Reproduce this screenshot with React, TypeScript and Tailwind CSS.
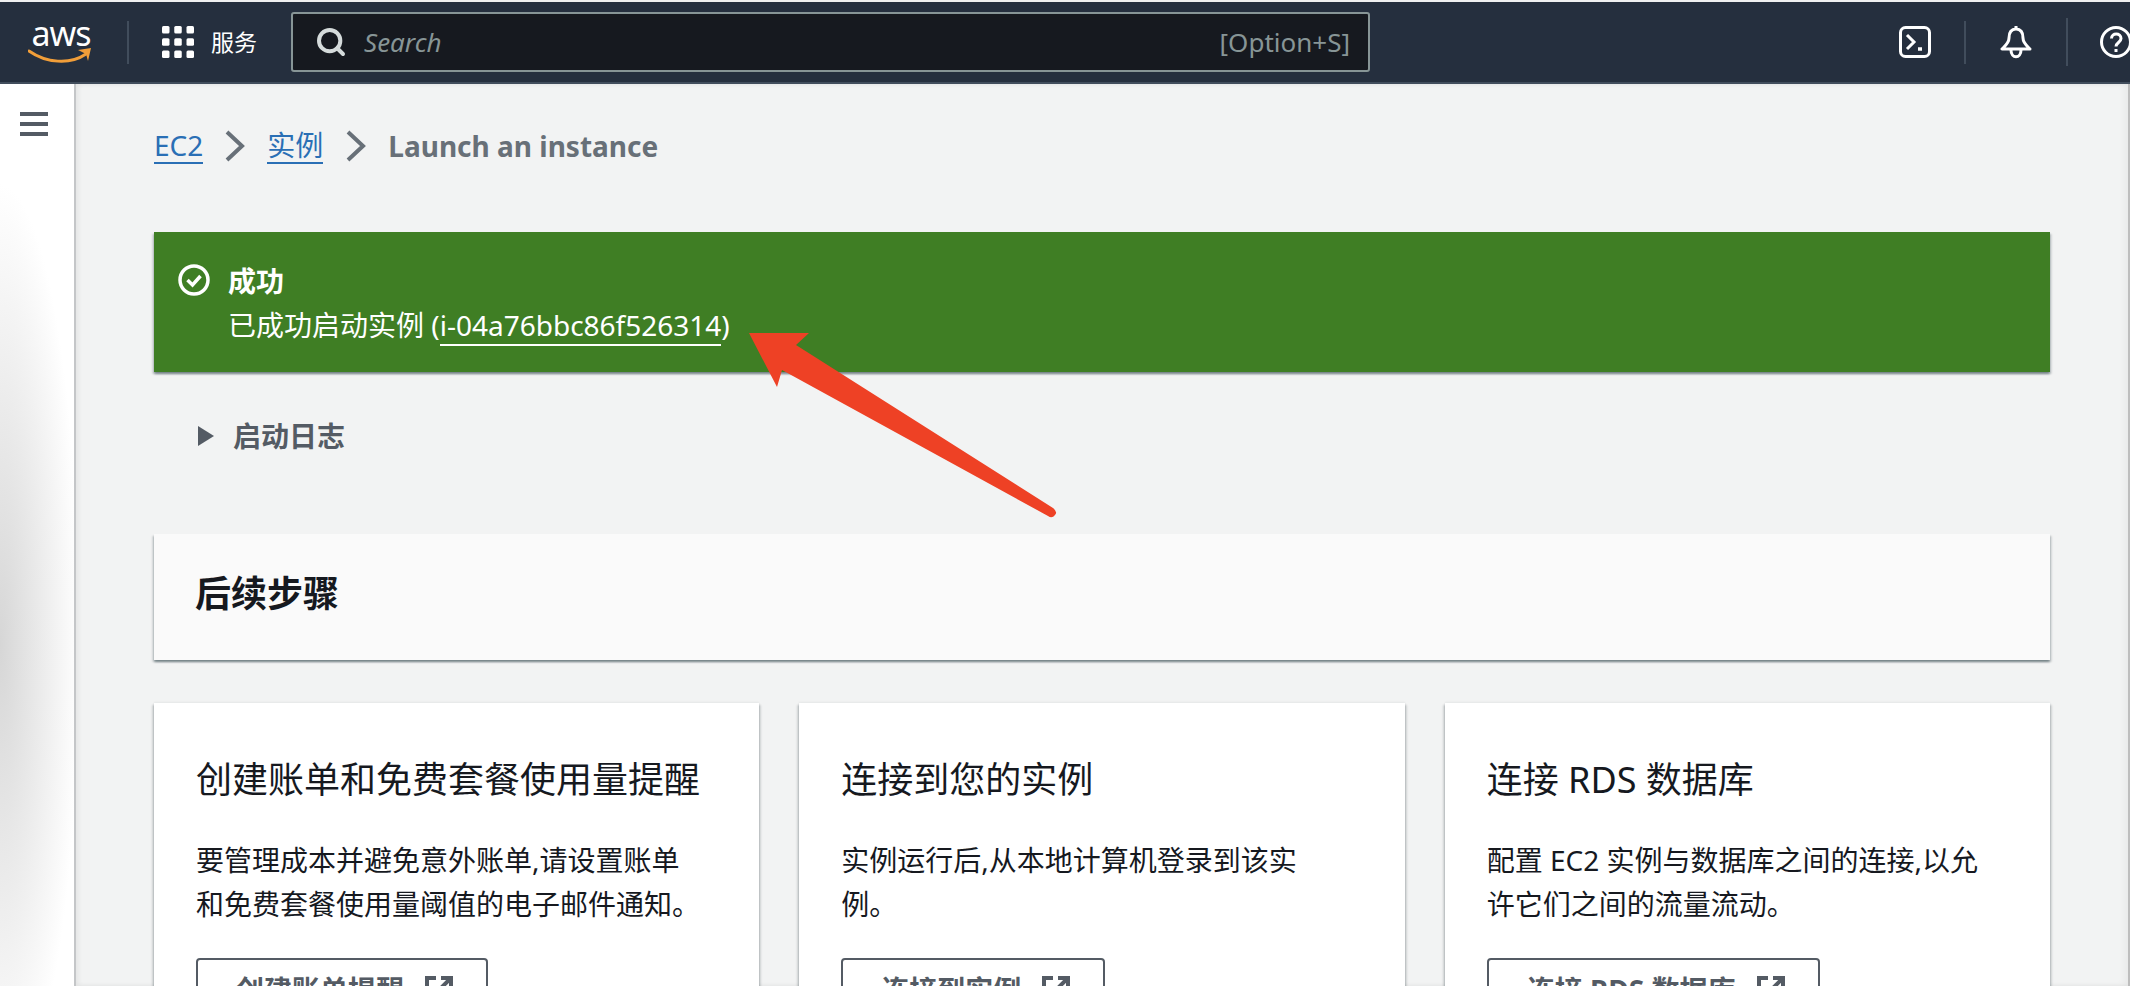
import { Search } from 'lucide-react';

const cards = [
  {
    title: '创建账单和免费套餐使用量提醒',
    body: '要管理成本并避免意外账单,请设置账单和免费套餐使用量阈值的电子邮件通知。',
    action: '创建账单提醒',
  },
  {
    title: '连接到您的实例',
    body: '实例运行后,从本地计算机登录到该实例。',
    action: '连接到实例',
  },
  {
    title: '连接 RDS 数据库',
    body: '配置 EC2 实例与数据库之间的连接,以允许它们之间的流量流动。',
    action: '连接 RDS 数据库',
  },
];

const Chevron = () => (
  <svg width="20" height="32" viewBox="0 0 20 32" fill="none" stroke="#687078" strokeWidth="4">
    <path d="M2 2l15 14L2 30" />
  </svg>
);

const ExternalIcon = () => (
  <svg width="30" height="30" viewBox="0 0 30 30" fill="none" stroke="#545b64" strokeWidth="4">
    <path d="M12 3H3v24h24v-9" />
    <path d="M17 3h10v10M27 3L13 17" />
  </svg>
);

const AwsLogo = () => (
  <div className="flex w-[66px] flex-col items-center">
    <span className="h-[28px] text-[34px] leading-[28px] tracking-[-1px] text-white">aws</span>
    <svg width="66" height="20" viewBox="0 0 66 20" fill="none" className="-mt-[1px]">
      <path d="M1 5C18 17 42 19 58 8" stroke="#f19e39" strokeWidth="3" strokeLinecap="round" />
      <path d="M50 4L63 2L60 15L58 8Z" fill="#f19e39" />
    </svg>
  </div>
);

const GridIcon = () => (
  <svg width="32" height="32" viewBox="0 0 32 32" fill="#fff">
    {[0, 12.25, 24.5].map((y) =>
      [0, 12.25, 24.5].map((x) => <rect key={`${x}-${y}`} x={x} y={y} width="7.5" height="7.5" rx="1.5" />),
    )}
  </svg>
);

const TerminalIcon = () => (
  <svg width="32" height="32" viewBox="0 0 32 32" fill="none" stroke="#fff" strokeWidth="3">
    <rect x="1.5" y="1.5" width="29" height="29" rx="5" />
    <path d="M8 9l7 7-7 7" />
    <path d="M19 23h4" strokeWidth="3.5" />
  </svg>
);

const BellIcon = () => (
  <svg width="32" height="34" viewBox="0 0 32 34" fill="none" stroke="#fff" strokeWidth="3" strokeLinejoin="round">
    <path d="M16 1v3" />
    <path d="M16 4c-5 0-7 4-7 9 0 5-4 8-7 11h28c-3-3-7-6-7-11 0-5-2-9-7-9z" />
    <path d="M11 25c0 9 10 9 10 0" />
  </svg>
);

const HelpIcon = () => (
  <svg width="32" height="32" viewBox="0 0 32 32" fill="none" stroke="#fff" strokeWidth="3" className="-mr-[2px] shrink-0">
    <circle cx="16" cy="16" r="14.5" />
    <path d="M11.5 12.5c0-6 9.5-6 9.5 0 0 4-5 4-5 8" />
    <path d="M16 23v3" />
  </svg>
);

export default function App() {
  return (
    <div
      lang="zh-CN"
      className="relative flex h-[986px] w-[2130px] flex-col overflow-hidden bg-[#f2f3f3] font-['Noto_Sans','Noto_Sans_CJK_SC',sans-serif] text-[28px] leading-[44px] text-[#16191f]"
    >
      <div className="h-[2px] bg-[#f0f0f0]" />
      <header className="flex h-[82px] shrink-0 items-center overflow-hidden border-b-2 border-[#414d5c] bg-[#252f3e]">
        <div className="ml-[28px] mr-[33px]">
          <AwsLogo />
        </div>
        <div className="h-[43px] w-[2px] bg-[#414d5c]" />
        <div className="ml-[33px] flex items-center gap-[17px] text-[23px] text-white">
          <GridIcon />
          <span>服务</span>
        </div>
        <div className="ml-[34px] flex h-[60px] w-[1079px] items-center rounded-[3px] border-2 border-[#879596] bg-[#16191f] pl-[22px] pr-[18px] text-[26px] text-[#879596]">
          <Search size={32} strokeWidth={3} color="#d5dbdb" className="shrink-0" />
          <span className="ml-[17px] italic">Search</span>
          <span className="ml-auto">[Option+S]</span>
        </div>
        <div className="ml-[529px] flex items-center">
          <TerminalIcon />
          <div className="ml-[33px] h-[43px] w-[2px] bg-[#414d5c]" />
          <div className="ml-[34px]">
            <BellIcon />
          </div>
          <div className="ml-[34px] h-[48px] w-[2px] bg-[#414d5c]" />
          <div className="ml-[32px]">
            <HelpIcon />
          </div>
        </div>
      </header>

      <div className="flex min-h-0 flex-1">
        <aside className="w-[76px] shrink-0 border-r-2 border-[#c4c6c8] bg-white bg-[radial-gradient(ellipse_80px_460px_at_0px_560px,#d6d6d6,#ffffff)] pl-[20px] pt-[28px]">
          <div className="flex w-[28px] flex-col gap-[6px]">
            <div className="h-[4px] bg-[#545b64]" />
            <div className="h-[4px] bg-[#545b64]" />
            <div className="h-[4px] bg-[#545b64]" />
          </div>
        </aside>

        <main className="min-w-0 flex-1 pl-[78px] pr-[78px] pt-[40px] shadow-[inset_3px_0_4px_rgba(0,0,0,0.05),inset_-4px_0_6px_rgba(0,0,0,0.04)]">
          <nav className="flex h-[44px] items-center">
            <span className="h-[36px] border-b-2 border-[#2a6fb5] leading-[34px] text-[#2a6fb5]">EC2</span>
            <span className="ml-[22px] mr-[22px]">
              <Chevron />
            </span>
            <span className="h-[36px] border-b-2 border-[#2a6fb5] leading-[34px] text-[#2a6fb5]">实例</span>
            <span className="ml-[23px] mr-[22px]">
              <Chevron />
            </span>
            <span className="font-bold text-[#687078]">Launch an instance</span>
          </nav>

          <section className="mt-[64px] flex h-[140px] bg-[#3f7e24] pl-[24px] pt-[27px] text-white shadow-[0_2px_2px_rgba(0,28,36,0.4),2px_2px_2px_rgba(0,28,36,0.1),-2px_2px_2px_rgba(0,28,36,0.1)]">
            <svg width="32" height="32" viewBox="0 0 32 32" fill="none" stroke="#fff" strokeWidth="3.5" className="mt-[5px] shrink-0">
              <circle cx="16" cy="16" r="14" />
              <path d="M9.5 16l5 5 8-9" />
            </svg>
            <div className="ml-[18px]">
              <div className="font-bold">成功</div>
              <div>
                已成功启动实例 (<span className="border-b-2 border-white">i-04a76bbc86f526314</span>)
              </div>
            </div>
          </section>

          <div className="mt-[42px] flex h-[44px] items-center pl-[44px] font-bold text-[#545b64]">
            <svg width="16" height="20" viewBox="0 0 16 20" fill="#545b64">
              <path d="M0 0l16 10L0 20z" />
            </svg>
            <span className="ml-[19px]">启动日志</span>
          </div>

          <section className="mt-[76px] flex h-[126px] items-center bg-[#fafafa] pb-[6px] pl-[41px] shadow-[0_2px_2px_rgba(0,28,36,0.4),2px_2px_2px_rgba(0,28,36,0.1),-2px_2px_2px_rgba(0,28,36,0.1)]">
            <h2 className="text-[36px] font-bold leading-[44px]">后续步骤</h2>
          </section>

          <div className="mt-[43px] grid grid-cols-3 gap-[40px]">
            {cards.map((card) => (
              <article
                key={card.title}
                className="h-[400px] bg-white px-[42px] pt-[55px] shadow-[0_2px_2px_rgba(0,28,36,0.3),2px_2px_2px_rgba(0,28,36,0.12),-2px_2px_2px_rgba(0,28,36,0.12),0_-1px_2px_rgba(0,28,36,0.06)]"
              >
                <h3 className="text-[36px] leading-[44px]">{card.title}</h3>
                <p className="mt-[36px] w-[506px]">{card.body}</p>
                <button className="mt-[32px] flex h-[64px] items-center gap-[20px] rounded-[4px] border-2 border-[#545b64] pl-[38px] pr-[32px] font-bold text-[#545b64]">
                  <span>{card.action}</span>
                  <ExternalIcon />
                </button>
              </article>
            ))}
          </div>
        </main>

        <div className="w-[2px] shrink-0 bg-[#bdbdbd]" />
      </div>

      <svg
        width="2130"
        height="986"
        viewBox="0 0 2130 986"
        className="pointer-events-none absolute left-0 top-0"
      >
        <path
          d="M749 333L809 333L796 345L1053 508Q1058 512 1055 515Q1052 519 1048 516L782 370L777 387Z"
          fill="#ee4125"
        />
      </svg>
    </div>
  );
}
